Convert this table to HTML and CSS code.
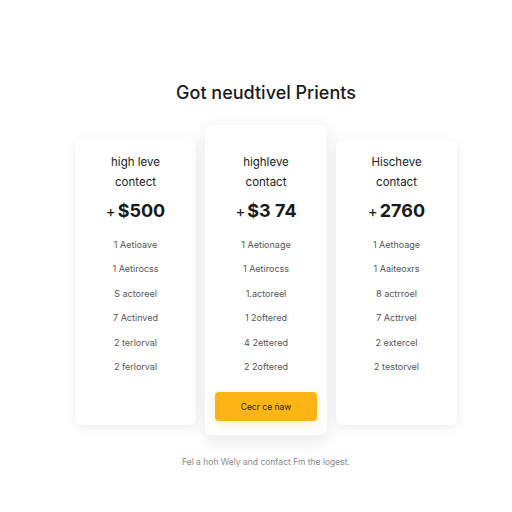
FILE: index.html
```html
<!DOCTYPE html>
<html lang="en">
<head>
    <meta charset="UTF-8">
    <meta name="viewport" content="width=device-width, initial-scale=1.0">
    <title>Pricing</title>
    <link rel="stylesheet" href="styles.css">
</head>
<body>

    <div class="page">
        <h1 class="page-title">Got neudtivel Prients</h1>

        <div class="plans">
            <div class="plan">
                <div class="plan-name">high leve<br>contect</div>
                <div class="plan-price"><span class="plus">+</span>$500</div>
                <ul class="plan-list">
                    <li>1 Aetioave</li>
                    <li>1 Aetirocss</li>
                    <li>S actoreel</li>
                    <li>7 Actinved</li>
                    <li>2 terlorval</li>
                    <li>2 ferlorval</li>
                </ul>
            </div>

            <div class="plan plan-featured">
                <div class="plan-name">highleve<br>contact</div>
                <div class="plan-price"><span class="plus">+</span>$3 74</div>
                <ul class="plan-list">
                    <li>1 Aetionage</li>
                    <li>1 Aetirocss</li>
                    <li>1.actoreel</li>
                    <li>1 2oftered</li>
                    <li>4 2ettered</li>
                    <li>2 2oftered</li>
                </ul>
                <button class="plan-button">Cecr ce ñaw</button>
            </div>

            <div class="plan">
                <div class="plan-name">Hischeve<br>contact</div>
                <div class="plan-price"><span class="plus">+</span>2760</div>
                <ul class="plan-list">
                    <li>1 Aethoage</li>
                    <li>1 Aaiteoxrs</li>
                    <li>8 actrroel</li>
                    <li>7 Acttrvel</li>
                    <li>2 extercel</li>
                    <li>2 testorvel</li>
                </ul>
            </div>
        </div>

        <p class="footnote">Fel a hoh Wely and confact Fm the logest.</p>
    </div>

</body>
</html>
```

FILE: styles.css
```css
* {
    padding: 0;
    margin: 0;
    box-sizing: border-box;
}

body {
    background: #ffffff;
    font-family: 'Inter', 'Open Sans', sans-serif;
    color: #1c1c1c;
}

.page {
    padding: 80px 0 0 20px;
    display: flex;
    flex-direction: column;
    align-items: center;
}

.page-title {
    font-size: 18px;
    line-height: 26px;
    font-weight: 500;
    color: #1a1a1a;
}

.plans {
    display: flex;
    align-items: flex-start;
    gap: 9px;
    margin-top: 19px;
}

.plan {
    width: 121px;
    height: 285px;
    margin-top: 15px;
    padding: 12px 10px 0;
    background: #ffffff;
    border-radius: 6px;
    box-shadow: 0 2px 12px rgba(0, 0, 0, 0.08);
    text-align: center;
}

.plan-featured {
    width: 122px;
    height: 310px;
    margin-top: 0;
    padding-top: 27px;
    box-shadow: 0 4px 18px rgba(0, 0, 0, 0.1);
}

.plan-name {
    font-size: 11.5px;
    line-height: 20px;
    color: #222;
}

.plan-price {
    margin-top: 7px;
    font-size: 18px;
    line-height: 24px;
    font-weight: 700;
    color: #1a1a1a;
}

.plus {
    font-weight: 400;
    font-size: 15px;
    margin-right: 2px;
}

.plan-list {
    list-style: none;
    margin-top: 9px;
}

.plan-list li {
    font-size: 9px;
    line-height: 24.4px;
    color: #555;
}

.plan-button {
    margin-top: 13px;
    width: 100%;
    height: 29px;
    border: none;
    border-radius: 4px;
    background: #fdb515;
    color: #2a2008;
    font-family: inherit;
    font-size: 8.5px;
    box-shadow: 0 3px 8px rgba(253, 181, 21, 0.25);
}

.footnote {
    margin-top: 22px;
    font-size: 8.5px;
    color: #8a8a8a;
}
```
